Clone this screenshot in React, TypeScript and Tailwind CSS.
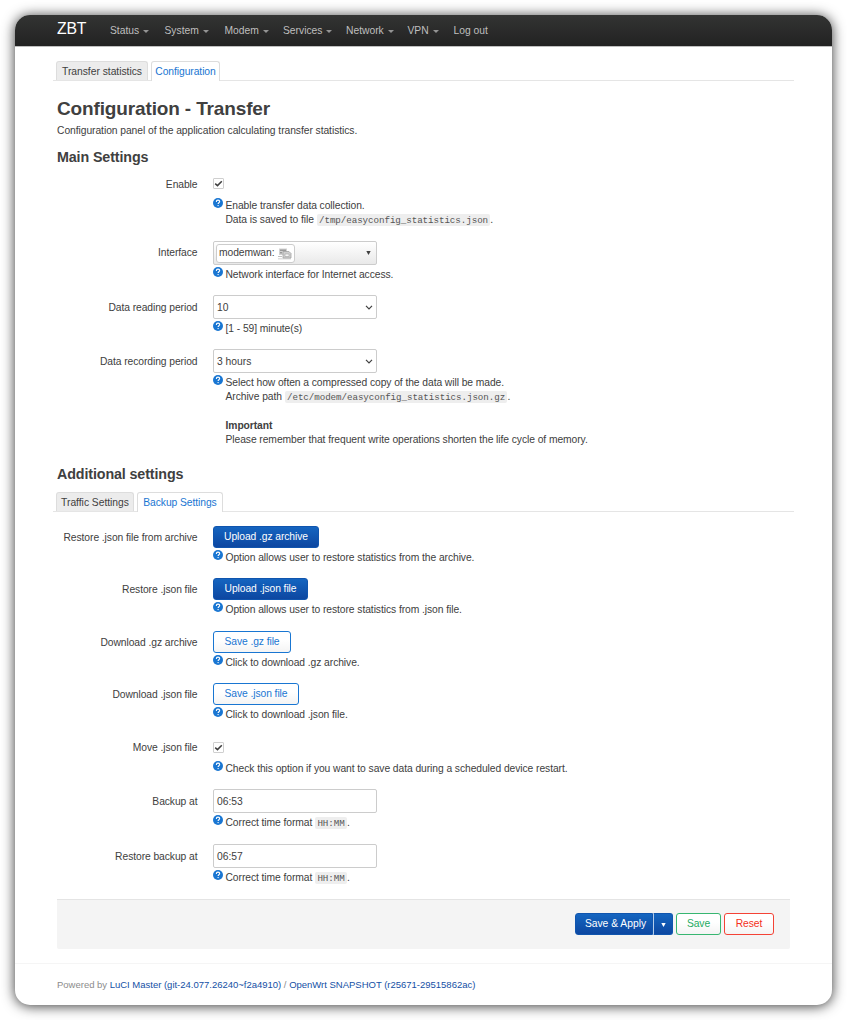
import type { ReactNode } from "react";

const MENU = [
  { label: "Status", w: "w-[54.5px]", caret: true },
  { label: "System", w: "w-[60px]", caret: true },
  { label: "Modem", w: "w-[58.5px]", caret: true },
  { label: "Services", w: "w-[63px]", caret: true },
  { label: "Network", w: "w-[61.5px]", caret: true },
  { label: "VPN", w: "w-[46px]", caret: true },
  { label: "Log out", w: "w-[60px]", caret: false },
];

function HelpIcon() {
  return (
    <svg className="-mt-[1px] mr-[2.5px] size-[10px] shrink-0" viewBox="0 0 10 10">
      <circle cx="5" cy="5" r="5" fill="#1976d2" />
      <path d="M3.3 3.9C3.3 2.8 4 2.1 5 2.1S6.7 2.7 6.7 3.6C6.7 4.7 5.1 4.8 5.1 6" fill="none" stroke="#fff" strokeWidth="1.1" />
      <circle cx="5.1" cy="7.6" r=".7" fill="#fff" />
    </svg>
  );
}

function Chevron() {
  return (
    <svg className="mr-[3px] mt-[1px] h-[5px] w-[8px]" viewBox="0 0 8 5">
      <path d="M1 .8L4 3.8L7 .8" fill="none" stroke="#404040" strokeWidth="1.2" />
    </svg>
  );
}

function Down({ className }: { className: string }) {
  return (
    <svg className={className} viewBox="0 0 5 4">
      <path d="M.3 0H4.7L2.5 4Z" fill="currentColor" />
    </svg>
  );
}

function Code({ children }: { children: ReactNode }) {
  return (
    <code className="rounded-[2px] bg-[#eeeeee] px-[2.3px] py-[.5px] align-[1px] font-['Liberation_Mono',monospace] text-[9.2px] leading-none tracking-[-0.06px] text-[#555]">
      {children}
    </code>
  );
}

function Row({ label, h, labelTop, help, children }: { label: string; h: string; labelTop: string; help: ReactNode; children: ReactNode }) {
  return (
    <div className={`flex ${h}`}>
      <div className={`w-[140.5px] shrink-0 text-right ${labelTop}`}>{label}</div>
      <div className="ml-[15.5px]">
        {children}
        <div className="flex">
          <HelpIcon />
          <div>{help}</div>
        </div>
      </div>
    </div>
  );
}

function Check({ gap }: { gap: string }) {
  return (
    <div className={`flex size-[11px] items-center justify-center rounded-[1px] border border-[#cfcfcf] bg-white ${gap}`}>
      <svg className="size-[9px] shrink-0" viewBox="0 0 9 9">
        <path d="M1.2 4.6L3.5 6.6L7.8 2.2" fill="none" stroke="#404040" strokeWidth="1.5" />
      </svg>
    </div>
  );
}

function Field({ value, h, chevron }: { value: string; h: string; chevron?: boolean }) {
  return (
    <div className={`flex w-[164px] items-center justify-between rounded-[2px] border border-[#cccccc] bg-white pl-[3px] ${h}`}>
      <span className="pt-[2px] tracking-normal">{value}</span>
      {chevron && <Chevron />}
    </div>
  );
}

function Tabs({ first, second, firstW, secondW }: { first: string; second: string; firstW: string; secondW: string }) {
  return (
    <div className="-ml-[4px] flex h-[20px] w-[741px] gap-[3px] border-b border-[#e5e5e5] pl-[3px]">
      <div className={`h-[19px] rounded-t-[3px] border border-b-0 border-[#dddddd] bg-[#ececec] text-center leading-[19px] tracking-[-0.02px] ${firstW}`}>{first}</div>
      <div className={`h-[20px] rounded-t-[3px] border border-b-0 border-[#dddddd] bg-white text-center leading-[19px] text-[#1976d2] ${secondW}`}>{second}</div>
    </div>
  );
}

const OUTLINE = "border bg-linear-to-b from-white from-40% to-[#f4f4f4]";
const SOLID = "border border-[#1055ae] bg-linear-to-b from-[#1565c0] to-[#0d47a1] text-white";

function Button({ children, className }: { children: ReactNode; className: string }) {
  return <div className={`flex h-[22px] items-center justify-center rounded-[3px] pt-[1px] tracking-[-0.08px] ${className}`}>{children}</div>;
}

export default function App() {
  return (
    <div className="h-[1020px] w-[847px] overflow-hidden bg-white px-[15px] pt-[15px] font-['Liberation_Sans',Arial,sans-serif] text-[10.3px] leading-[14.3px] tracking-[-0.07px] whitespace-nowrap text-[#404040]">
      <div className="flex h-[990px] w-[817px] flex-col overflow-hidden rounded-[15px] bg-white shadow-[0_1px_13px_rgba(0,0,0,0.8)]">
        <header className="flex h-[32px] shrink-0 border-b border-[#bfbfbf] bg-linear-to-b from-[#333433] to-[#222222] bg-clip-padding pl-[42px] text-[#bfbfbf]">
          <div className="w-[53px] text-[15.8px] leading-[28px] tracking-[-0.2px] text-white">ZBT</div>
          <nav className="flex leading-[31px]">
            {MENU.map((m) => (
              <div key={m.label} className={`flex items-center gap-[4px] ${m.w}`}>
                <span className="tracking-normal">{m.label}</span>
                {m.caret && (
                  <svg className="mt-[1px] h-[3px] w-[6px]" viewBox="0 0 6 3">
                    <path d="M0 0H6L3 3Z" fill="#949494" />
                  </svg>
                )}
              </div>
            ))}
          </nav>
        </header>

        <main className="h-[917px] shrink-0 border-b border-[#f5f5f5] pt-[14px] pl-[42px]">
          <Tabs first="Transfer statistics" second="Configuration" firstW="w-[92px]" secondW="w-[69px]" />
          <h2 className="mt-[15px] h-[28px] text-[19px] leading-[25px] font-bold tracking-[-0.14px]">Configuration - Transfer</h2>
          <p className="h-[14px] tracking-[-0.06px]">Configuration panel of the application calculating transfer statistics.</p>
          <h3 className="mt-[9px] h-[20px] text-[14.3px] leading-[20px] font-bold tracking-[-0.12px]">Main Settings</h3>

          <div className="mt-[11px]">
            <Row
              label="Enable"
              h="h-[64px]"
              labelTop="mt-0"
              help={<>Enable transfer data collection.<br />Data is saved to file <Code>/tmp/easyconfig_statistics.json</Code>.</>}
            >
              <Check gap="mb-[10px]" />
            </Row>
            <Row label="Interface" h="h-[54px]" labelTop="mt-[4px]" help="Network interface for Internet access.">
              <div className="-mt-[1px] mb-[2.5px] flex h-[24px] w-[164px] items-center justify-between rounded-[2px] border border-[#cccccc] bg-linear-to-b from-white to-[#e9e9e9] pl-[2px]">
                <div className="flex h-[19px] w-[79px] items-center rounded-[3px] border border-[#cccccc] bg-white pl-[2px]">
                  <span className="w-[59px] shrink-0">modemwan:</span>
                  <svg className="h-[13px] w-[14px] shrink-0" viewBox="0 0 14 13">
                    <path d="M1 1.5H9V8H1Z" fill="#d2d2d2" />
                    <path d="M2 2.5H8V4H2ZM2 5H4V6.5H2Z" fill="#999" />
                    <path d="M0 9H4V10H0ZM0 11.5H13V12.3H0Z" fill="#c0c0c0" />
                    <path d="M5 4.5H11L13 6.5V11H5Z" fill="#cfcfcf" stroke="#a2a2a2" strokeWidth=".8" />
                    <path d="M7 7H11V9.5H7Z" fill="#f5f5f5" stroke="#999" strokeWidth=".5" />
                  </svg>
                </div>
                <Down className="mr-[5px] h-[4px] w-[5px]" />
              </div>
            </Row>
            <Row label="Data reading period" h="h-[54px]" labelTop="mt-[5px]" help="[1 - 59] minute(s)">
              <div className="-mt-[1px] mb-[3px]"><Field value="10" h="h-[24px]" chevron /></div>
            </Row>
            <Row
              label="Data recording period"
              h="h-[114px]"
              labelTop="mt-[5px]"
              help={
                <>
                  Select how often a compressed copy of the data will be made.<br />
                  Archive path <Code>/etc/modem/easyconfig_statistics.json.gz</Code>.<br />
                  <br />
                  <b>Important</b><br />
                  Please remember that frequent write operations shorten the life cycle of memory.
                </>
              }
            >
              <div className="-mt-[1px] mb-[3px]"><Field value="3 hours" h="h-[24px]" chevron /></div>
            </Row>
          </div>

          <h3 className="h-[20px] text-[14.3px] leading-[20px] font-bold tracking-[-0.12px]">Additional settings</h3>
          <div className="mt-[8px]">
            <Tabs first="Traffic Settings" second="Backup Settings" firstW="w-[78px]" secondW="w-[86px]" />
          </div>

          <div className="mt-[14px]">
            <Row label="Restore .json file from archive" h="h-[52px]" labelTop="mt-[5px]" help="Option allows user to restore statistics from the archive.">
              <Button className={`mb-[3px] w-[106px] ${SOLID}`}>Upload .gz archive</Button>
            </Row>
            <Row label="Restore .json file" h="h-[53px]" labelTop="mt-[5px]" help="Option allows user to restore statistics from .json file.">
              <Button className={`mb-[3px] w-[95px] ${SOLID}`}>Upload .json file</Button>
            </Row>
            <Row label="Download .gz archive" h="h-[52px]" labelTop="mt-[5px]" help="Click to download .gz archive.">
              <Button className={`mb-[2.5px] w-[78px] border-[#1976d2] text-[#1976d2] ${OUTLINE}`}>Save .gz file</Button>
            </Row>
            <Row label="Download .json file" h="h-[59px]" labelTop="mt-[5px]" help="Click to download .json file.">
              <Button className={`mb-[3px] w-[86px] border-[#1976d2] text-[#1976d2] ${OUTLINE}`}>Save .json file</Button>
            </Row>
            <Row label="Move .json file" h="h-[48px]" labelTop="-mt-[1px]" help="Check this option if you want to save data during a scheduled device restart.">
              <Check gap="mb-[9px]" />
            </Row>
            <Row label="Backup at" h="h-[55px]" labelTop="mt-[5px]" help={<>Correct time format <Code>HH:MM</Code>.</>}>
              <div className="-mt-[1px] mb-[3px]"><Field value="06:53" h="h-[24px]" /></div>
            </Row>
            <Row label="Restore backup at" h="h-[54px]" labelTop="mt-[5px]" help={<>Correct time format <Code>HH:MM</Code>.</>}>
              <div className="-mt-[1px] mb-[3px]"><Field value="06:57" h="h-[24px]" /></div>
            </Row>
          </div>

          <div className="flex h-[50px] w-[733px] justify-end gap-[3px] rounded-b-[2px] border-t border-[#e4e4e4] bg-[#f4f4f4] pt-[13px] pr-[16px]">
            <div className="flex">
              <Button className={`w-[78px] rounded-r-none pl-[3px] tracking-normal! ${SOLID}`}>Save &amp; Apply</Button>
              <Button className={`w-[20px] rounded-l-none border-l-[#b5cdea]! ${SOLID}`}>
                <Down className="h-[4px] w-[5px]" />
              </Button>
            </div>
            <Button className={`w-[45px] border-[#37b671] text-[#24ab62] ${OUTLINE}`}>Save</Button>
            <Button className={`w-[50px] border-[#f44336] text-[#f42f20] ${OUTLINE}`}>Reset</Button>
          </div>
        </main>

        <footer className="pt-[14px] pl-[42px] text-[9.5px] tracking-[-0.01px] text-[#8c8c8c]">
          Powered by <a className="text-[#1450a5]">LuCI Master (git-24.077.26240~f2a4910)</a> / <a className="text-[#1450a5]">OpenWrt SNAPSHOT (r25671-29515862ac)</a>
        </footer>
      </div>
    </div>
  );
}
